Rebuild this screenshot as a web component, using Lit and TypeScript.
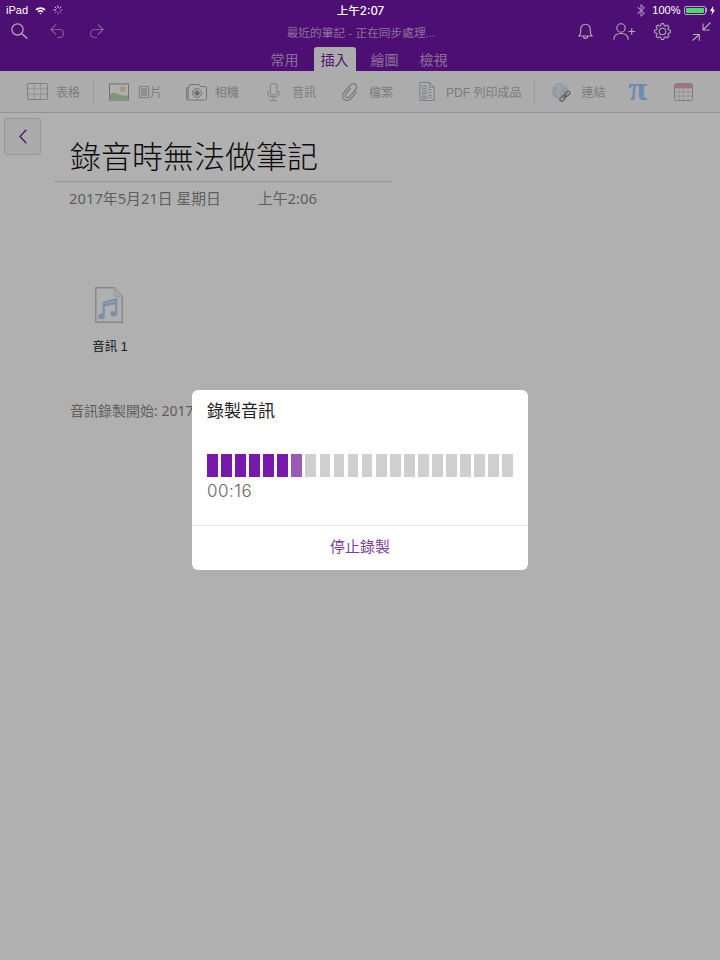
import { LitElement, html, css, svg } from "lit";
import { customElement } from "lit/decorators.js";

const ic = (w: number, h: number, vw: number, vh: number, body: unknown) =>
  html`<svg class="ic" width=${w} height=${h} viewBox="0 0 ${vw} ${vh}" fill="none">${body}</svg>`;

function gearPath(cx: number, cy: number, ro: number, ri: number, teeth: number) {
  const pts: string[] = [];
  const step = (Math.PI * 2) / teeth;
  for (let i = 0; i < teeth; i++) {
    const a = i * step - Math.PI / 2;
    const seq: [number, number][] = [
      [ri, a - step * 0.36],
      [ro, a - step * 0.2],
      [ro, a + step * 0.2],
      [ri, a + step * 0.36],
    ];
    for (const [r, t] of seq) pts.push(`${(cx + r * Math.cos(t)).toFixed(2)} ${(cy + r * Math.sin(t)).toFixed(2)}`);
  }
  return "M" + pts.join("L") + "Z";
}

const W = "#fff";
const icons = {
  search: ic(17, 16, 17, 16, svg`<circle cx="6.500" cy="6.500" r="5.600" stroke=${W} stroke-width="1.200"/><path d="M10.500 10.500l5.800 5" stroke=${W} stroke-width="1.500"/>`),
  undo: ic(15, 14, 15, 14, svg`<path d="M6 .5L.8 5.500l5.200 5M.8 5.500h8.500c5.500 0 5.500 7.800 0 8H7" stroke=${W} stroke-opacity=".5" stroke-width="1.100"/>`),
  redo: ic(16, 14, 16, 14, svg`<path d="M10 .5l5.200 5-5.200 5M15.200 5.500H6.700c-5.500 0-5.500 7.800 0 8H9" stroke=${W} stroke-opacity=".5" stroke-width="1.100"/>`),
  bell: ic(15, 16, 15, 16, svg`<path d="M.8 13c1.300-1 1.900-2 1.900-4.300V6a4.800 4.800 0 019.600 0v2.700c0 2.300.6 3.300 1.900 4.300z" stroke=${W} stroke-width="1.100" stroke-linejoin="round"/><path d="M5.400 13.300a2.100 2.100 0 004.200 0" stroke=${W} stroke-width="1.100"/>`),
  user: ic(22, 17, 22, 17, svg`<circle cx="8" cy="5" r="4.200" stroke=${W} stroke-width="1.100"/><path d="M.8 16.800c0-4 3-6.300 7.200-6.300s7.200 2.300 7.200 6.300" stroke=${W} stroke-width="1.100"/><path d="M15.500 8.500h6.500M18.700 5.200v6.600" stroke=${W} stroke-width="1.100"/>`),
  gear: ic(17, 17, 17, 17, svg`<path d=${gearPath(8.5, 8.5, 8, 6.1, 8)} stroke=${W} stroke-width="1.050" stroke-linejoin="round"/><circle cx="8.500" cy="8.500" r="3.300" stroke=${W} stroke-width="1.050"/>`),
  shrink: ic(19, 19, 19, 19, svg`<path d="M18.500.5l-7.500 7.500M11 1.500V8h6.800M.5 18.500L7.500 12.500M1 12.500h6.300v6.300" stroke=${W} stroke-width="1.100"/>`),
  table: ic(21, 17, 22, 18, svg`<rect x=".5" y=".5" width="21" height="17" rx="1" fill="#fff" stroke="#8a8a8a"/><path d="M7.500 1v16M14.500 1v16M1 6.200h20M1 11.800h20" stroke="#bbb"/>`),
  picture: ic(20, 18, 21, 18, svg`<rect x=".5" y=".5" width="20" height="17" fill="#fff" stroke="#6e6e6e"/><path d="M1 17v-5c3-3 5-2.500 8-1 3 1.500 8 1 11 2v4z" fill="#8fc47c"/><circle cx="14.500" cy="6" r="2.500" fill="#f6cf78" stroke="#d8a93e" stroke-width=".6"/>`),
  camera: ic(22, 18, 22, 17, svg`<path d="M1.500 4.500L4 3.500 5 1h9l1.200 2h4.300a2 2 0 012 2v9.500a2 2 0 01-2 2h-16a2 2 0 01-2-2z" fill="#fff" stroke="#777"/><rect x="1.500" y="4.200" width="2.500" height="12" fill="#aaa"/><circle cx="12" cy="9.500" r="4.500" stroke="#777"/><circle cx="12" cy="9.500" r="2.600" fill="#666"/>`),
  mic: ic(13, 20, 14, 20, svg`<rect x="3.500" y="1" width="7" height="12" rx="2.500" fill="#fff" stroke="#888"/><path d="M1 9v2.500c0 2.300 2 3.700 6 3.700s6-1.400 6-3.700V9M7 15v4M3.500 19.300h7" stroke="#888"/>`),
  clip: ic(19, 20, 24, 26, svg`<g transform="rotate(40 12 13)"><path d="M9 9v9.500a3 3 0 006 0V6a4.500 4.500 0 00-9 0v13.500a6 6 0 0012 0V8" stroke="#666" stroke-width="1.300"/></g>`),
  pdf: ic(16, 19, 16, 20, svg`<path d="M.5.500h10l5 5v14H.5z" fill="#fff" stroke="#8a8a8a"/><path d="M10.500.500v5h5" stroke="#8a8a8a"/><path d="M3 4h4v3H3zM3 9.500h4v3H3zM3 15h4v2.500H3z" stroke="#5f8cb6" stroke-width=".9"/><path d="M9 8h4M9 11h4M9 14h4M9 16.500h4" stroke="#999"/>`),
  link: ic(22, 20, 24, 22, svg`<circle cx="10" cy="10" r="9" fill="#bcd5ee"/><path d="M5 5c3-1 5 0 5 2s-3 2-3 4 2 2 2 5M12 2c1 2 3 2 5 2" stroke="#f2f6fa" stroke-width="1.600"/><path d="M10 18l2.500-2.500a2 2 0 012.800 2.800L13 20.600a2 2 0 01-3-2.600zM15 13l2.500-2.500a2 2 0 012.800 2.800L18 15.600a2 2 0 01-3-2.600zM13.500 17.500l4-4" stroke="#444" stroke-width="1.300"/>`),
  cal: ic(19, 18, 19, 18, svg`<rect x=".5" y=".5" width="18" height="17" rx="2" fill="#fff" stroke="#999"/><path d="M1 1h17v4.500H1z" fill="#e08c8e"/><path d="M1 9h17M1 13h17M5 6v11M9.500 6v11M14 6v11" stroke="#ccc"/>`),
  chevron: ic(8, 15, 8, 15, svg`<path d="M7.300.7L1 7.500l6.300 6.800" stroke="#7719aa" stroke-width="1.300"/>`),
  audio: ic(28, 36, 28, 36, svg`<path d="M.8.800h18.500l7.900 8.500v25.900H.8z" fill="#fff" stroke="#c4c4c4" stroke-width="1.400"/><path d="M19.300.800l7.900 8.500h-7.900z" fill="#f2f2f2" stroke="#ddd"/><path d="M8.700 15.500l12.500-3v14M8.700 15.500v14" stroke="#b2d2f6" stroke-width="2.200"/><path d="M8.700 18.500l12.500-3" stroke="#b2d2f6" stroke-width="2.600"/><ellipse cx="6.300" cy="29.500" rx="3.400" ry="2.700" fill="#b2d2f6"/><ellipse cx="18.800" cy="26.700" rx="3.400" ry="2.700" fill="#b2d2f6"/>`),
  wifi: ic(11, 9, 13, 10, svg`<path d="M.5 3.500a8.500 8.500 0 0112 0l-1.400 1.500a6.500 6.500 0 00-9.200 0zM3 6a5 5 0 017 0l-1.300 1.400a3 3 0 00-4.400 0zM5.300 8.300a1.700 1.700 0 012.400 0L6.500 9.600z" fill="#fff"/>`),
  spin: ic(10, 10, 10, 10, svg`<path d="M5 .5v2.500M.5 5H3M1.800 1.800l1.700 1.700M8.200 1.800L6.500 3.500" stroke="#fff" stroke-opacity=".95" stroke-width=".9"/><path d="M5 7v2.500M7 5h2.500M6.500 6.500l1.700 1.700M3.500 6.500L1.800 8.200" stroke="#fff" stroke-opacity=".5" stroke-width=".9"/>`),
  bt: ic(8, 13, 7, 12, svg`<path d="M.5 3l6 5.500L3.500 11V1l3 2.500-6 5.500" stroke="#fff" stroke-opacity=".5" stroke-width="1"/>`),
  bolt: ic(5, 9, 5, 9, svg`<path d="M3.200 0L0 5h2L1.600 9 5 3.800H3z" fill="#fff"/>`),
};

const tools = [
  ["table", "表格", "sep"], ["picture", "圖片", ""], ["camera", "相機", ""], ["mic", "音訊", ""], ["clip", "檔案", ""], ["pdf", "PDF 列印成品", "sep sep2"], ["link", "連結", ""],
] as const;

@customElement("app-root")
export class AppRoot extends LitElement {
  static styles = css`
    :host { display: block; width: 720px; height: 960px; position: relative; overflow: hidden; background: #fff;
      font-family: "Liberation Sans", "Noto Sans CJK TC", sans-serif; }
    .ic { display: block; flex: none; }
    .head { background: #7216a8; color: #fff; height: 71px; display: flex; flex-direction: column; }
    .status { position: relative; z-index: 2; height: 20px; display: grid; grid-template-columns: 1fr auto 1fr; align-items: center; padding: 0 5px 0 6px; font-size: 11px; }
    .status .l, .status .r { display: flex; align-items: center; }
    .status .l { gap: 7px; }
    .status .r { justify-content: flex-end; }
    .pct { margin: 0 3px 0 7px; }
    .clock { font-size: 11.500px; font-family: "Inter", "Noto Sans CJK TC", sans-serif; font-weight: 500; }
    .batt { width: 22px; height: 9px; border: 1px solid rgba(255,255,255,.6); border-radius: 2px; padding: 1px; box-sizing: border-box; display: flex; }
    .batt i { flex: 1; background: #4cd964; border-radius: 1px; }
    .cap { width: 1.500px; height: 4px; background: rgba(255,255,255,.6); margin-right: 3px; }
    .bar { height: 22px; display: grid; grid-template-columns: 1fr auto 1fr; align-items: center; padding: 0 9px 0 11px; }
    .bar .l, .bar .r { display: flex; align-items: center; }
    .bar .l .undo { margin-left: 22px; }
    .bar .l .redo { margin-left: 23px; }
    .bar .r { justify-content: flex-end; }
    .bar .r .user { margin-left: 20px; }
    .bar .r .gear { margin-left: 19px; }
    .bar .r .shrink { margin-left: 21px; }
    .sync { font-size: 11.700px; color: rgba(255,255,255,.62); }
    .tabs { flex: 1; display: flex; justify-content: center; align-items: flex-end; gap: 15px; font-size: 14px; padding-right: 2px; }
    .tab { height: 24px; display: flex; align-items: center; color: rgba(255,255,255,.62); border-radius: 3px 3px 0 0; }
    .tab:last-child { margin-left: 6px; }
    .tab.on { background: #f9f9f9; color: #7719aa; padding: 0 7px; }
    .tools { height: 41px; background: #f9f9f9; border-bottom: 1px solid #d4d4d4; display: flex; align-items: center; padding-left: 26px; color: #b4b4b4; font-size: 12px; }
    .tool { display: flex; align-items: center; gap: 8px; margin-right: 23px; }
    .slot { width: 22px; display: flex; justify-content: center; opacity: .62; }
    .tool.sep { border-right: 1px solid #e4e4e4; height: 24px; padding-right: 13px; margin-right: 14px; }
    .tool.sep2 { margin-right: 16px; }
    .pi { font-family: "Liberation Serif", serif; font-size: 34px; font-weight: 700; color: #9ccbff; line-height: 1; width: 19px; margin: -6px 27px 0 0; display: flex; justify-content: center; }
    .calslot { opacity: .7; }
    .back { margin: 5px 0 0 4px; width: 37px; height: 37px; box-sizing: border-box; border: 1px solid #dcdcdc; border-radius: 3px; background: #f8f8f8; display: flex; align-items: center; justify-content: center; }
    .note { position: absolute; left: 54px; top: 135px; width: 338px; }
    .title { font-size: 31px; line-height: 46px; padding-left: 16px; color: #111; font-weight: 300; border-bottom: 1px solid #ddd; height: 46px; }
    .date { padding-left: 15px; font-size: 14.800px; color: #8a8a8a; margin-top: 6px; line-height: 20px; display: flex; gap: 37px; font-family: "Noto Sans", "Noto Sans CJK TC", sans-serif; }
    .att { margin: 79px 0 0 23px; width: 64px; display: flex; flex-direction: column; align-items: center; color: #222; font-size: 12.500px; gap: 13px; }
    .att span { margin-left: 2px; }
    .started { font-size: 14px; color: #8a8a8a; margin: 45px 0 0 16px; white-space: nowrap; font-family: "Noto Sans", "Noto Sans CJK TC", sans-serif; }
    .dim { position: absolute; inset: 0; z-index: 1; background: rgba(0,0,0,.31); }
    .dialog { position: absolute; z-index: 3; left: 192px; top: 390px; width: 336px; height: 180px; background: #fff; border-radius: 6px; display: flex; flex-direction: column; }
    .dlg-main { flex: 1; padding: 0 15px; }
    .dlg-title { font-size: 17px; color: #222; line-height: 24px; margin-top: 10px; }
    .meter { display: flex; gap: 3.300px; margin-top: 30px; }
    .meter i { flex: 1; height: 23px; background: #cfcfcf; }
    .meter i.f { background: #7719aa; }
    .meter i.p { background: #9b59b6; }
    .time { font-family: "Inter", sans-serif; font-size: 17px; font-weight: 300; color: #666; margin-top: 5px; line-height: 18px; letter-spacing: .5px; }
    .stop { height: 44px; border-top: 1px solid #e4e4e4; display: flex; align-items: center; justify-content: center; color: #7d3ca5; font-size: 15px; }
    .stop span { margin-top: -6px; }
  `;
  render() {
    const bars = Array.from({ length: 22 }, (_, i) => (i < 6 ? "f" : i === 6 ? "p" : ""));
    return html`
      <div class="head">
        <div class="status">
          <div class="l"><span>iPad</span>${icons.wifi}${icons.spin}</div>
          <div class="clock">上午2:07</div>
          <div class="r">${icons.bt}<span class="pct">100%</span>
            <div class="batt"><i></i></div><div class="cap"></div>${icons.bolt}</div>
        </div>
        <div class="bar">
          <div class="l">${icons.search}<span class="undo">${icons.undo}</span><span class="redo">${icons.redo}</span></div>
          <div class="sync">最近的筆記 - 正在同步處理...</div>
          <div class="r">${icons.bell}<span class="user">${icons.user}</span><span class="gear">${icons.gear}</span><span class="shrink">${icons.shrink}</span></div>
        </div>
        <div class="tabs">
          <div class="tab">常用</div><div class="tab on">插入</div><div class="tab">繪圖</div><div class="tab">檢視</div>
        </div>
      </div>
      <div class="tools">
        ${tools.map(([k, t, s]) => html`<div class="tool ${s}"><div class="slot">${icons[k]}</div><span>${t}</span></div>`)}
        <div class="pi">π</div><div class="calslot">${icons.cal}</div>
      </div>
      <div class="back">${icons.chevron}</div>
      <div class="note">
        <div class="title">錄音時無法做筆記</div>
        <div class="date"><span>2017年5月21日 星期日</span><span>上午2:06</span></div>
        <div class="att">${icons.audio}<span>音訊 1</span></div>
        <div class="started">音訊錄製開始: 2017年5月21日 上午2:06</div>
      </div>
      <div class="dim"></div>
      <div class="dialog">
        <div class="dlg-main">
          <div class="dlg-title">錄製音訊</div>
          <div class="meter">${bars.map((b) => html`<i class=${b}></i>`)}</div>
          <div class="time">00:16</div>
        </div>
        <div class="stop"><span>停止錄製</span></div>
      </div>
    `;
  }
}
